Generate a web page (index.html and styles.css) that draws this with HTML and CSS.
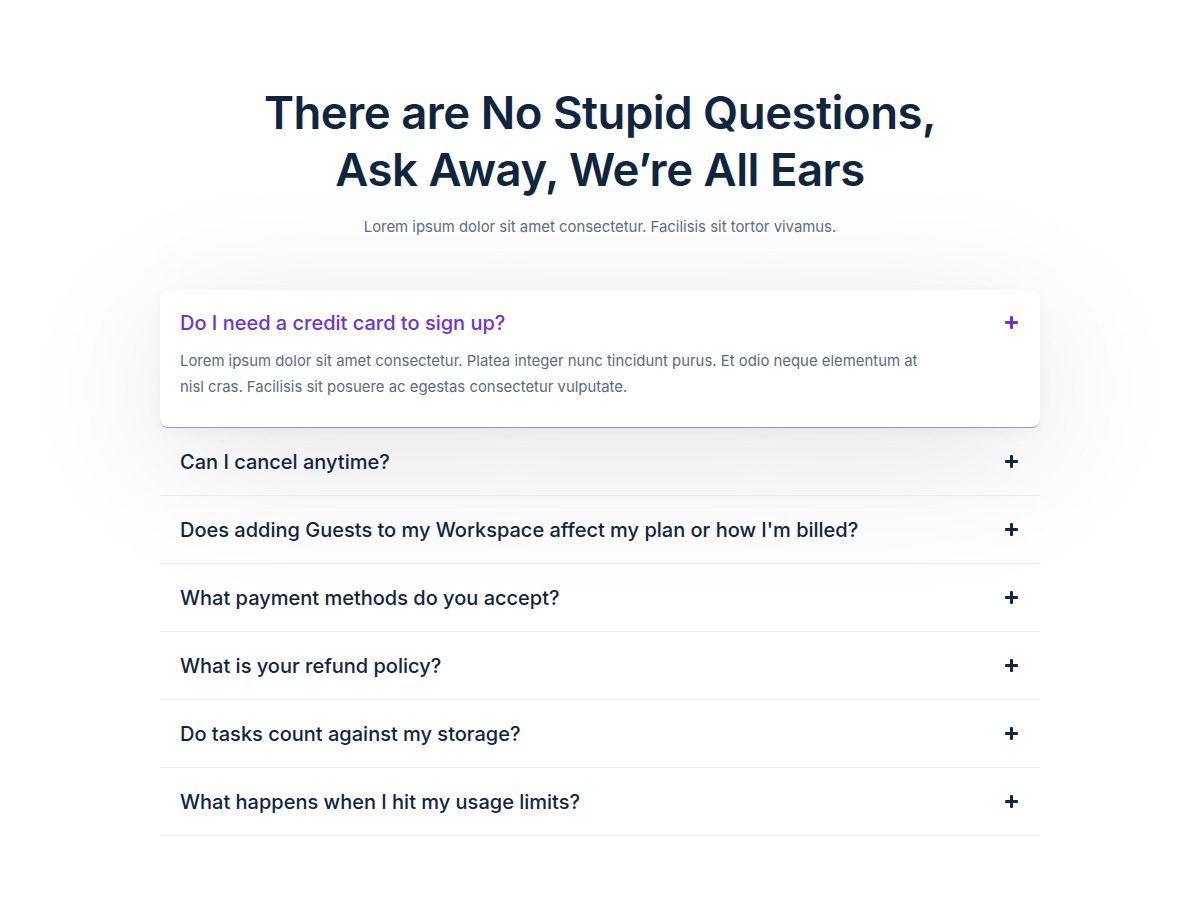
FILE: index.html
```html
<html>
<head>
	<title>FAQ</title>
<link rel="stylesheet" href="styles.css">
</head>
<body>
<section class="faq">
	<h1 class="faq-title">There are No Stupid Questions,<br>Ask Away, We&rsquo;re All Ears</h1>
	<p class="faq-lead">Lorem ipsum dolor sit amet consectetur. Facilisis sit tortor vivamus.</p>

	<div class="faq-list">
		<div class="faq-item open">
			<div class="faq-q"><span>Do I need a credit card to sign up?</span><i class="plus"></i></div>
			<p class="faq-a">Lorem ipsum dolor sit amet consectetur. Platea integer nunc tincidunt purus. Et odio neque elementum at nisl cras. Facilisis sit posuere ac egestas consectetur vulputate.</p>
		</div>
		<div class="faq-item">
			<div class="faq-q"><span>Can I cancel anytime?</span><i class="plus"></i></div>
		</div>
		<div class="faq-item">
			<div class="faq-q"><span>Does adding Guests to my Workspace affect my plan or how I'm billed?</span><i class="plus"></i></div>
		</div>
		<div class="faq-item">
			<div class="faq-q"><span>What payment methods do you accept?</span><i class="plus"></i></div>
		</div>
		<div class="faq-item">
			<div class="faq-q"><span>What is your refund policy?</span><i class="plus"></i></div>
		</div>
		<div class="faq-item">
			<div class="faq-q"><span>Do tasks count against my storage?</span><i class="plus"></i></div>
		</div>
		<div class="faq-item">
			<div class="faq-q"><span>What happens when I hit my usage limits?</span><i class="plus"></i></div>
		</div>
	</div>
</section>
</body>
</html>
```

FILE: styles.css
```css
BODY {margin:0; background-color:white; color:#10263f; font-family: Inter, "Liberation Sans", Arial, sans-serif;}

.faq {padding-top:84px; padding-bottom:84px; display:flex; flex-direction:column; align-items:center;}
.faq-title {margin:0; font-size:45.5px; line-height:57px; font-weight:600; letter-spacing:-0.5px; text-align:center; color:#10263f;}
.faq-lead {margin:17px 0 0 0; font-size:14.9px; line-height:24px; color:#5c6e84; text-align:center;}

.faq-list {width:880px; margin-top:51px;}
.faq-item {border-bottom:1px solid #ebebeb;}
.faq-item.open {background:white; border-radius:8px; border-bottom:1px solid #a58de6; box-shadow: 0 30px 150px rgba(0,0,0,0.11), 0 4px 14px rgba(0,0,0,0.04); padding-bottom:27px;}

.faq-q {display:flex; align-items:center; justify-content:space-between; height:67px; padding:0 22px 0 20px; font-size:20px; font-weight:500; color:#10263f;}
.open .faq-q {color:#6a33de; height:65px;}
.faq-a {margin:-7px 0 0 20px; max-width:745px; font-size:14.9px; line-height:26px; color:#5b6a7e;}

.plus {position:relative; width:13px; height:13px; flex:none;}
.plus:before, .plus:after {content:""; position:absolute; background:currentColor; border-radius:1px;}
.plus:before {left:0; right:0; top:5px; height:3px;}
.plus:after {top:0; bottom:0; left:5px; width:3px;}
```
